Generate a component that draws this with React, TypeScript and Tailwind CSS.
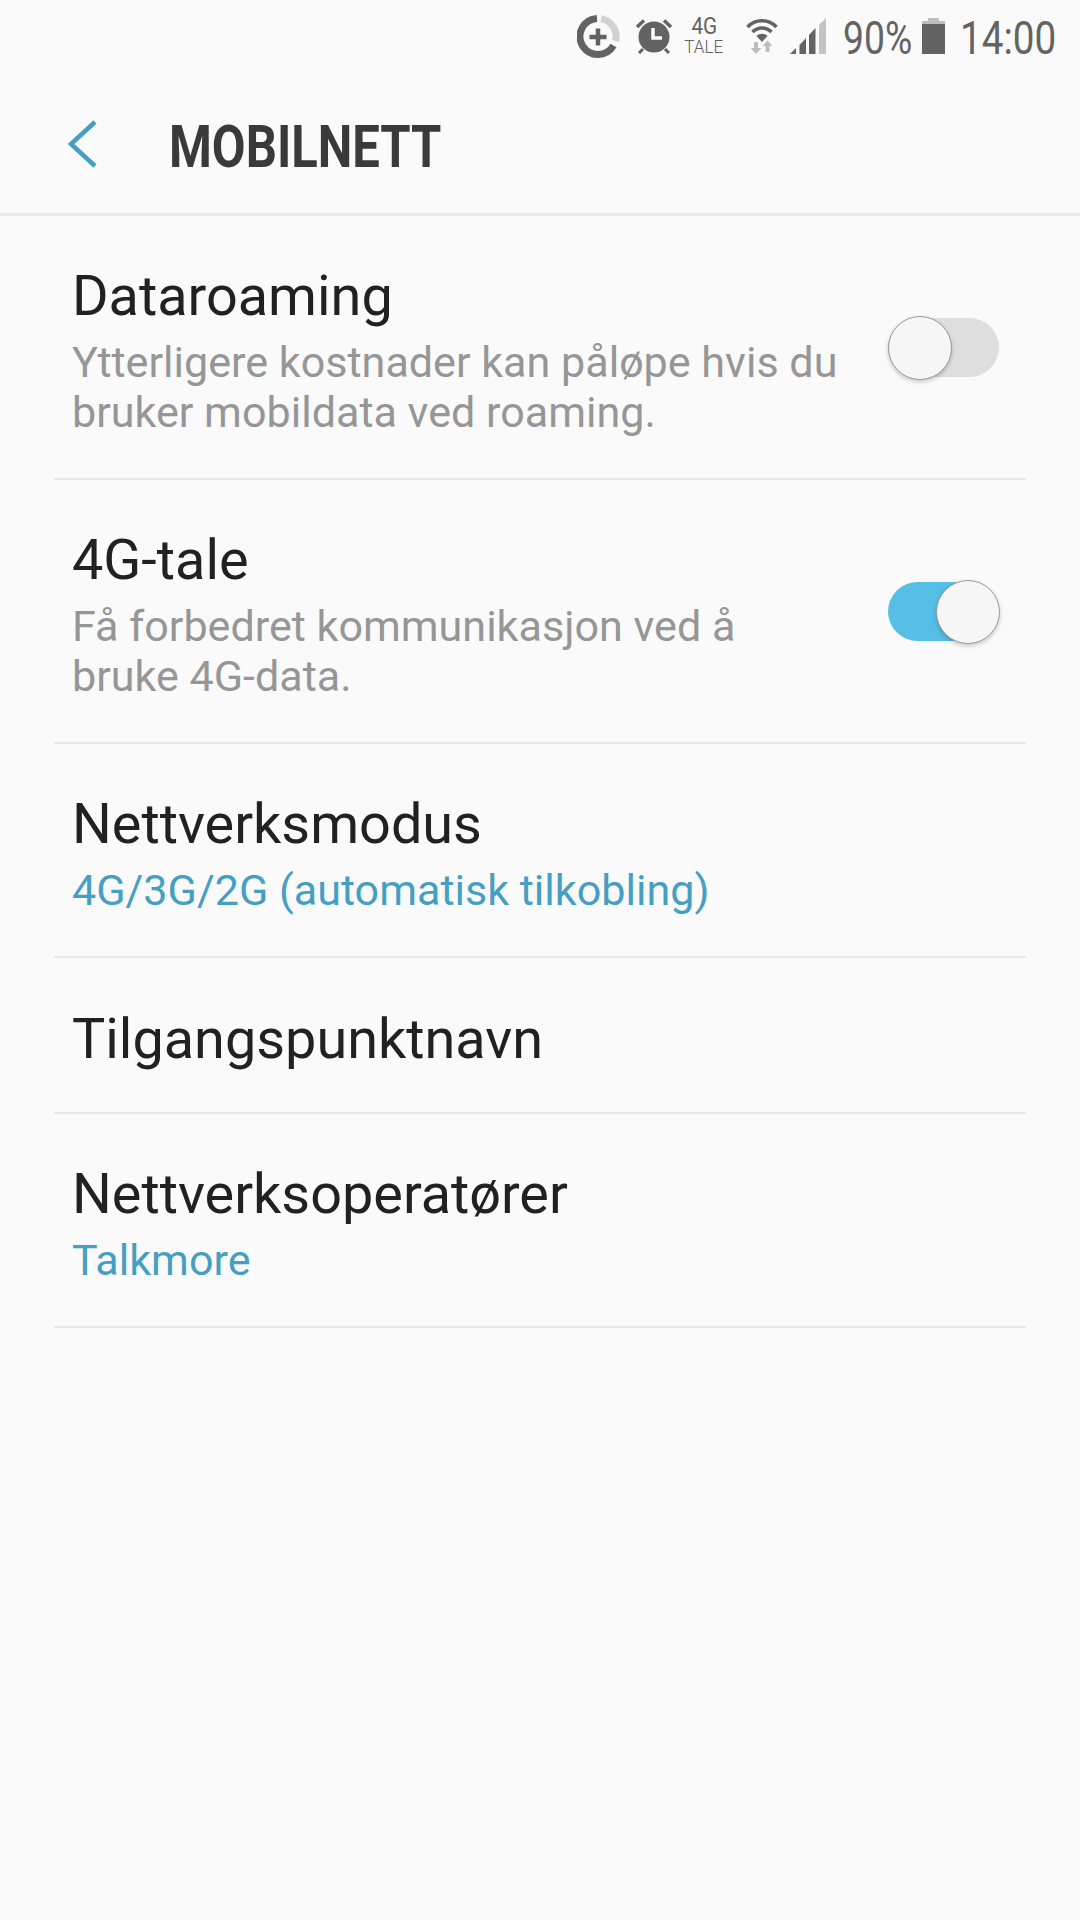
const font = "font-['Roboto',sans-serif]"

function DataUsageIcon() {
  return (
    <svg width="43" height="43" viewBox="0 0 43 43" fill="none">
      <path d="M20 3.500A18 18 0 1 0 36.500 30.600" stroke="#636363" strokeWidth="7" />
      <path d="M24 3.700A18 18 0 0 1 38.500 26" stroke="#d2d2d2" strokeWidth="7" />
      <path d="M21 13.500v17M12.500 22h17" stroke="#636363" strokeWidth="4.500" />
    </svg>
  )
}

function AlarmIcon() {
  return (
    <svg width="36" height="36" viewBox="0 0 36 36" fill="none">
      <circle cx="18" cy="19" r="15.500" fill="#636363" />
      <path d="M1 9l7-6.500M35 9l-7-6.500" stroke="#636363" strokeWidth="3.500" />
      <path d="M3 35l4-4M33 35l-4-4" stroke="#636363" strokeWidth="3" />
      <path d="M17 10v10h9" stroke="#fafafa" strokeWidth="3.500" />
    </svg>
  )
}

function WifiIcon() {
  return (
    <svg width="32" height="36" viewBox="0 0 32 36" fill="none">
      <path d="M1.500 9C9 0.500 23 0.500 30.500 9" stroke="#636363" strokeWidth="3.500" />
      <path d="M6.500 14C12 8.500 20 8.500 25.500 14" stroke="#636363" strokeWidth="3.500" />
      <path d="M10.500 18C13.500 15 18.500 15 21.500 18L16 24z" fill="#636363" />
      <path d="M8 24h4v6h3.500L10 36l-5.500-6H8z" fill="#bdbdbd" />
      <path d="M19.500 34v-6H16.500l5-5.500 5 5.500h-3v6z" fill="#bdbdbd" />
    </svg>
  )
}

function SignalIcon() {
  return (
    <svg width="36" height="36" viewBox="0 0 36 36">
      <path d="M0 36L6 30V36z" fill="#636363" />
      <path d="M9.500 27L16 20V36H9.500z" fill="#636363" />
      <path d="M19 17L25.500 10V36H19z" fill="#636363" />
      <path d="M29 7L36 0V36H29z" fill="#c4c4c4" />
    </svg>
  )
}

function BatteryIcon() {
  return (
    <svg width="23" height="36" viewBox="0 0 23 36">
      <path d="M6 0H17V3H23V7H0V3H6z" fill="#bdbdbd" />
      <rect x="0" y="6" width="23" height="30" fill="#636363" />
    </svg>
  )
}

function StatusBar() {
  return (
    <div className="flex h-[72px] items-center justify-end pr-[25px] text-[#636363]">
      <div className="mr-[16px]"><DataUsageIcon /></div>
      <div className="mr-[13px]"><AlarmIcon /></div>
      <div className="mr-[23px] flex w-[38px] flex-col items-center text-center leading-none">
        <span className="origin-center scale-x-[0.9] text-[23px] leading-[22px]">4G</span>
        <span className="origin-center scale-x-[0.9] text-[19px] leading-[18px] font-light">TALE</span>
      </div>
      <div className="mr-[12px]"><WifiIcon /></div>
      <div className="mr-[17px]"><SignalIcon /></div>
      <div className="mr-[10px] w-[69px] pt-[3px]">
        <span className="block origin-left scale-x-[0.81] text-[46px] leading-none whitespace-nowrap">90%</span>
      </div>
      <div className="mr-[15px]"><BatteryIcon /></div>
      <div className="w-[95px] pt-[3px]">
        <span className="block origin-left scale-x-[0.84] text-[46px] leading-none whitespace-nowrap">14:00</span>
      </div>
    </div>
  )
}

function Toggle({ on }: { on: boolean }) {
  return (
    <div className="relative top-[1px] h-[60px] w-[112px] shrink-0">
      <div className={`absolute top-0 left-0 h-[59px] w-[111px] rounded-full ${on ? 'bg-[#55bfe6]' : 'bg-[#dedede]'}`} />
      <div
        className={`absolute top-[-2px] size-[64px] rounded-full border-[1.5px] border-[#9a9a9a] bg-[#f6f6f6] shadow-[0_2px_4px_rgba(0,0,0,0.2)] ${on ? 'left-[48px]' : 'left-0'}`}
      />
    </div>
  )
}

interface RowProps {
  title: string
  summary?: string
  accent?: boolean
  height: string
  toggle?: boolean
  on?: boolean
}

function Row({ title, summary, accent, height, toggle, on }: RowProps) {
  return (
    <div className={`flex items-center justify-between border-b-2 border-[#e8e8e8] ${height} pr-[26px] pl-[18px]`}>
      <div className="min-w-0 pb-[2px]">
        <div className="text-[55.800px] leading-[84px] text-[#212121]">{title}</div>
        {summary && (
          <div className={`w-[775px] text-[43.100px] leading-[50px] ${accent ? 'text-[#459fc3]' : 'text-[#969696]'}`}>
            {summary}
          </div>
        )}
      </div>
      {toggle && <Toggle on={!!on} />}
    </div>
  )
}

export default function App() {
  return (
    <div className={`h-[1920px] w-[1080px] overflow-hidden bg-[#fafafa] ${font}`}>
      <StatusBar />
      <div className="flex h-[144px] items-center border-b-[3px] border-[#e8e8e8]">
        <svg className="mt-[2px] ml-[67px]" width="30" height="48" viewBox="0 0 30 48" fill="none">
          <path d="M28 2L4 24l24 22" stroke="#459fc3" strokeWidth="4.500" />
        </svg>
        <h1 className="mt-[8px] ml-[72px] origin-left scale-x-[0.83] text-[59px] leading-none font-bold text-[#3a3a3a]">MOBILNETT</h1>
      </div>
      <div className="mx-[54px]">
        <Row title="Dataroaming" summary="Ytterligere kostnader kan påløpe hvis du bruker mobildata ved roaming." height="h-[264px]" toggle />
        <Row title="4G-tale" summary="Få forbedret kommunikasjon ved å bruke 4G-data." height="h-[264px]" toggle on />
        <Row title="Nettverksmodus" summary="4G/3G/2G (automatisk tilkobling)" accent height="h-[214px]" />
        <Row title="Tilgangspunktnavn" height="h-[156px] pt-[9px]" />
        <Row title="Nettverksoperatører" summary="Talkmore" accent height="h-[214px]" />
      </div>
    </div>
  )
}
